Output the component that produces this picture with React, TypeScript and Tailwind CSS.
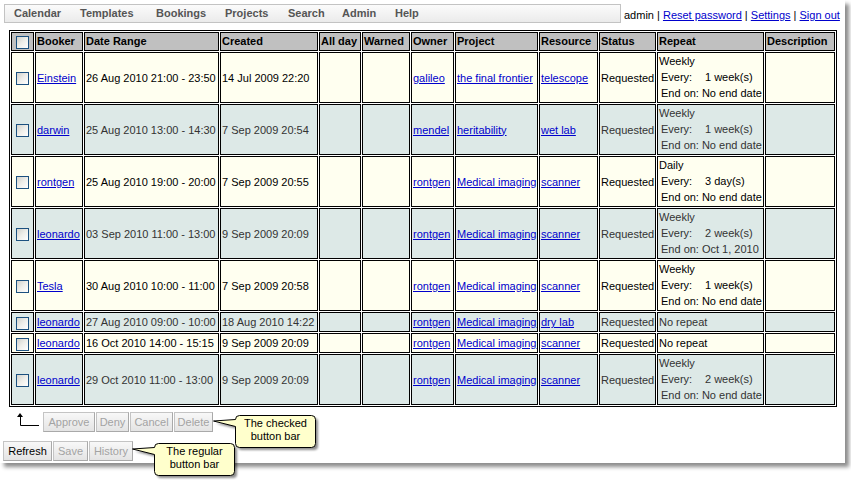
import React from "react";

type Repeat = { kind: string; every: string; end: string } | null;

type Booking = {
  booker: string;
  range: string;
  created: string;
  owner: string;
  project: string;
  resource: string;
  repeat: Repeat;
};

const bookings: Booking[] = [
  { booker: "Einstein", range: "26 Aug 2010 21:00 - 23:50", created: "14 Jul 2009 22:20", owner: "galileo", project: "the final frontier", resource: "telescope", repeat: { kind: "Weekly", every: "1 week(s)", end: "No end date" } },
  { booker: "darwin", range: "25 Aug 2010 13:00 - 14:30", created: "7 Sep 2009 20:54", owner: "mendel", project: "heritability", resource: "wet lab", repeat: { kind: "Weekly", every: "1 week(s)", end: "No end date" } },
  { booker: "rontgen", range: "25 Aug 2010 19:00 - 20:00", created: "7 Sep 2009 20:55", owner: "rontgen", project: "Medical imaging", resource: "scanner", repeat: { kind: "Daily", every: "3 day(s)", end: "No end date" } },
  { booker: "leonardo", range: "03 Sep 2010 11:00 - 13:00", created: "9 Sep 2009 20:09", owner: "rontgen", project: "Medical imaging", resource: "scanner", repeat: { kind: "Weekly", every: "2 week(s)", end: "Oct 1, 2010" } },
  { booker: "Tesla", range: "30 Aug 2010 10:00 - 11:00", created: "7 Sep 2009 20:58", owner: "rontgen", project: "Medical imaging", resource: "scanner", repeat: { kind: "Weekly", every: "1 week(s)", end: "No end date" } },
  { booker: "leonardo", range: "27 Aug 2010 09:00 - 10:00", created: "18 Aug 2010 14:22", owner: "rontgen", project: "Medical imaging", resource: "dry lab", repeat: null },
  { booker: "leonardo", range: "16 Oct 2010 14:00 - 15:15", created: "9 Sep 2009 20:09", owner: "rontgen", project: "Medical imaging", resource: "scanner", repeat: null },
  { booker: "leonardo", range: "29 Oct 2010 11:00 - 13:00", created: "9 Sep 2009 20:09", owner: "rontgen", project: "Medical imaging", resource: "scanner", repeat: { kind: "Weekly", every: "2 week(s)", end: "No end date" } },
];

const menu = [
  { label: "Calendar", w: "w-[66px]" },
  { label: "Templates", w: "w-[76px]" },
  { label: "Bookings", w: "w-[69px]" },
  { label: "Projects", w: "w-[63px]" },
  { label: "Search", w: "w-[54px]" },
  { label: "Admin", w: "w-[53px]" },
  { label: "Help", w: "w-[40px]" },
];

const headers = ["Booker", "Date Range", "Created", "All day", "Warned", "Owner", "Project", "Resource", "Status", "Repeat", "Description"];

function Check() {
  return (
    <span className="inline-block h-[13px] w-[13px] border border-[#1c5180] bg-gradient-to-br from-[#d2d2cc] via-[#eeeeea] to-white align-middle" />
  );
}

function A({ children }: { children: React.ReactNode }) {
  return <span className="text-[#0000cc] underline">{children}</span>;
}

function Btn({ label, w, off }: { label: string; w: string; off?: boolean }) {
  return (
    <span
      className={`${w} flex h-[20px] items-center justify-center border border-[#c4c4c4] border-b-[#a9a9a9] border-r-[#a9a9a9] bg-gradient-to-b from-[#f8f8f8] to-[#e4e4e4] ${off ? "text-[#a3a3a3]" : "text-black"}`}
    >
      {label}
    </span>
  );
}

function Callout({ lines, className }: { lines: string[]; className: string }) {
  return (
    <div className={`absolute h-[40px] w-[110px] ${className}`}>
      <svg width="110" height="40" className="absolute left-0 top-0 overflow-visible">
        <defs>
          <filter id="blur" x="-10%" y="-10%" width="130%" height="140%">
            <feGaussianBlur stdDeviation="1.2" />
          </filter>
        </defs>
        <path
          d="M27 1 H99 Q103 1 103 5 V29 Q103 33 99 33 H27 Q23 33 23 29 V12 L1 6.5 L23 5 Q23 1 27 1 Z"
          transform="translate(3 3)"
          fill="rgba(0,0,0,0.45)"
          filter="url(#blur)"
        />
        <path
          d="M27 1 H99 Q103 1 103 5 V29 Q103 33 99 33 H27 Q23 33 23 29 V12 L1 6.5 L23 5 Q23 1 27 1 Z"
          fill="#ffffcc"
          stroke="#000"
          strokeWidth="1"
          transform="translate(0.5 0.5)"
        />
      </svg>
      <div className="absolute left-[23px] top-[3px] w-[81px] text-center text-[11px] leading-[13px] text-black">
        {lines.map((l) => (
          <div key={l}>{l}</div>
        ))}
      </div>
    </div>
  );
}

export default function App() {
  return (
    <div className="relative h-[485px] w-[851px] overflow-hidden bg-white font-['Liberation_Sans',Arial,sans-serif] text-[11px] text-black">
      <div className="h-[463px] w-[845px] bg-white shadow-[4px_4px_4px_rgba(0,0,0,0.45)]">
        <div className="flex items-start pl-[4px] pt-[4px]">
          <div className="flex h-[19px] w-[617px] items-center border border-[#c3c3c3] bg-gradient-to-b from-[#fbfbfb] to-[#ebebeb] pl-[9px] font-bold text-[#555555]">
            {menu.map((m) => (
              <span key={m.label} className={m.w}>
                {m.label}
              </span>
            ))}
          </div>
          <div className="ml-[3px] mt-[4px] whitespace-nowrap leading-[14px]">
            admin | <A>Reset password</A> | <A>Settings</A> | <A>Sign out</A>
          </div>
        </div>

        <table className="ml-[9px] mt-[7px] w-[828px] table-fixed border-separate border-spacing-[1px] border border-black">
          <colgroup>
            <col className="w-[23px]" />
            <col className="w-[48px]" />
            <col className="w-[135px]" />
            <col className="w-[98px]" />
            <col className="w-[42px]" />
            <col className="w-[48px]" />
            <col className="w-[43px]" />
            <col className="w-[83px]" />
            <col className="w-[59px]" />
            <col className="w-[57px]" />
            <col className="w-[107px]" />
            <col className="w-[70px]" />
          </colgroup>
          <thead>
            <tr>
              <th className="h-[19px] border border-black bg-[#c0c0c0] p-0 text-center align-middle leading-[15px]">
                <Check />
              </th>
              {headers.map((h) => (
                <th key={h} className="h-[19px] whitespace-nowrap border border-black bg-[#c0c0c0] px-[1px] py-0 text-left align-middle font-bold leading-[15px]">
                  {h}
                </th>
              ))}
            </tr>
          </thead>
          <tbody>
            {bookings.map((b, i) => {
              const even = i % 2 === 1;
              const td = `border border-black p-[1px] align-middle whitespace-nowrap leading-[16px] ${even ? "bg-[#dde9e7] text-[#333333]" : "bg-[#fffff0] text-black"}`;
              return (
                <tr key={i} className={b.repeat ? "h-[51px]" : "h-[20px]"}>
                  <td className={`${td} text-center`}>
                    <Check />
                  </td>
                  <td className={td}>
                    <A>{b.booker}</A>
                  </td>
                  <td className={td}>{b.range}</td>
                  <td className={td}>{b.created}</td>
                  <td className={td} />
                  <td className={td} />
                  <td className={td}>
                    <A>{b.owner}</A>
                  </td>
                  <td className={td}>
                    <A>{b.project}</A>
                  </td>
                  <td className={td}>
                    <A>{b.resource}</A>
                  </td>
                  <td className={td}>Requested</td>
                  <td className={`${td} align-top`}>
                    {b.repeat ? (
                      <div>
                        <div className="leading-[14px]">{b.repeat.kind}</div>
                        <div className="mt-[1px] grid grid-cols-[auto_auto] justify-start gap-x-[3px] pl-[2px] leading-[16px]">
                          <span>Every:</span>
                          <span>&nbsp;{b.repeat.every}</span>
                          <span>End on:</span>
                          <span>{b.repeat.end}</span>
                        </div>
                      </div>
                    ) : (
                      "No repeat"
                    )}
                  </td>
                  <td className={td} />
                </tr>
              );
            })}
          </tbody>
        </table>

        <div className="mt-[5px] flex h-[20px] items-center">
          <svg width="30" height="20" viewBox="0 0 30 20" className="ml-[13px]">
            <path d="M7 1 L10 5 L4 5 Z" fill="#000" />
            <path d="M7.5 5 V13.5 H26" stroke="#000" strokeWidth="1" fill="none" />
          </svg>
          <div className="flex gap-[1px]">
            <Btn label="Approve" w="w-[52px]" off />
            <Btn label="Deny" w="w-[33px]" off />
            <Btn label="Cancel" w="w-[43px]" off />
            <Btn label="Delete" w="w-[39px]" off />
          </div>
        </div>

        <div className="ml-[3px] mt-[9px] flex gap-[1px]">
          <Btn label="Refresh" w="w-[49px]" />
          <Btn label="Save" w="w-[35px]" off />
          <Btn label="History" w="w-[44px]" off />
        </div>
      </div>

      <Callout lines={["The checked", "button bar"]} className="left-[212px] top-[414px]" />
      <Callout lines={["The regular", "button bar"]} className="left-[131px] top-[442px]" />
    </div>
  );
}
